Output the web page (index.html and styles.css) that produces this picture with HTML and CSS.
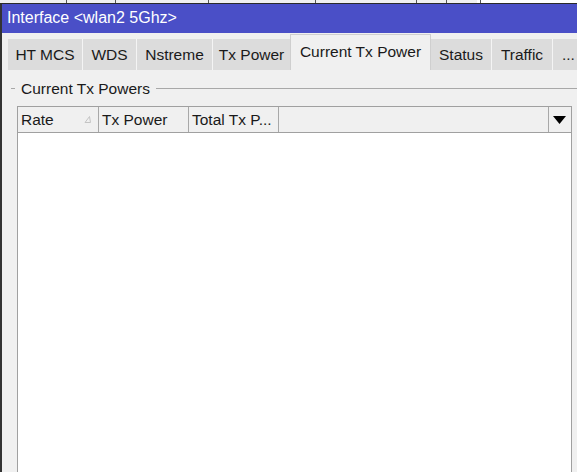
FILE: index.html
```html
<!DOCTYPE html>
<html lang="en">

<head>
    <meta charset="UTF-8">
    <meta name="viewport" content="width=device-width, initial-scale=1.0">
    <title>Interface &lt;wlan2 5Ghz&gt;</title>
    <link rel="stylesheet" href="styles.css">
</head>

<body>
    <!-- bottom edge of the window behind -->
    <div class="back-strip">
        <span class="back-sep"></span>
        <span class="back-sep"></span>
        <span class="back-sep"></span>
        <span class="back-sep"></span>
        <span class="back-sep"></span>
        <span class="back-sep"></span>
        <span class="back-sep"></span>
    </div>

    <div class="window">
        <div class="title-bar">Interface &lt;wlan2 5Ghz&gt;</div>

        <div class="tabs">
            <div class="tab tab-mcs">HT MCS</div>
            <div class="tab tab-wds">WDS</div>
            <div class="tab tab-nstreme">Nstreme</div>
            <div class="tab tab-txpower">Tx Power</div>
            <div class="tab active">Current Tx Power</div>
            <div class="tab tab-status">Status</div>
            <div class="tab tab-traffic">Traffic</div>
            <div class="tab more">...</div>
        </div>

        <div class="content">
            <div class="group-title">Current Tx Powers</div>

            <div class="list">
                <div class="list-header">
                    <div class="col col-rate">
                        Rate
                        <svg class="sort-icon" width="7" height="7" viewBox="0 0 7 7">
                            <path d="M5.5 0.5 L1 6.5 L6.5 6.5 Z" fill="none" stroke="#c4c4c4" stroke-width="1"/>
                        </svg>
                    </div>
                    <div class="col col-power">Tx Power</div>
                    <div class="col col-total">Total Tx P...</div>
                    <div class="col col-fill"></div>
                    <div class="col col-menu">
                        <svg width="13" height="8" viewBox="0 0 13 8">
                            <path d="M0 0 L13 0 L6.5 8 Z" fill="#000"/>
                        </svg>
                    </div>
                </div>
                <div class="list-body"></div>
            </div>
        </div>
    </div>
</body>

</html>
```

FILE: styles.css
```css
body {
    margin: 0;
    background-color: #f0f0f0;
    font-family: "Liberation Sans", Arial, sans-serif;
    color: #1a1a1a;
    overflow: hidden;
}

.back-strip {
    display: flex;
    height: 3px;
    background: linear-gradient(to right, #f0f0f0 477px, #ffffff 477px);
    border-bottom: 1px solid #2a2a2a;
}

.back-sep {
    height: 3px;
    border-right: 1px solid #555;
}

.back-sep:nth-child(1) { width: 66px; }
.back-sep:nth-child(2) { width: 48px; }
.back-sep:nth-child(3) { width: 92px; }
.back-sep:nth-child(4) { width: 106px; }
.back-sep:nth-child(5) { width: 100px; }
.back-sep:nth-child(6) { width: 29px; }
.back-sep:nth-child(7) { width: 33px; }

.window {
    border-left: 2px solid #333;
    height: 468px;
}

.title-bar {
    height: 29px;
    line-height: 28px;
    padding-left: 5px;
    background-color: #4a4fc7;
    color: #ffffff;
    font-size: 16px;
}

.tabs {
    display: flex;
    align-items: flex-end;
    height: 37px;
    padding-left: 6px;
}

.tab {
    height: 31px;
    line-height: 31px;
    background-color: #dcdcdc;
    border-left: 1px solid #f4f4f4;
    font-size: 15.5px;
    text-align: center;
    white-space: nowrap;
    box-sizing: border-box;
}

.tab:first-child {
    border-left: none;
}

.tab-mcs { width: 74px; }
.tab-wds { width: 54px; }
.tab-nstreme { width: 76px; }
.tab-txpower { width: 78px; }
.tab-status { width: 60px; }
.tab-traffic { width: 61px; }

.tab.active {
    width: 141px;
    height: 36px;
    line-height: 34px;
    background-color: #f0f0f0;
    border: 1px solid #cfcfcf;
    border-bottom: none;
}

.tab.active + .tab {
    border-left: none;
}

.tab.more {
    flex: 1;
    text-align: left;
    padding-left: 9px;
}

.content {
    padding-top: 10px;
}

.group-title {
    display: flex;
    align-items: center;
    height: 17px;
    font-size: 15.5px;
    line-height: 17px;
}

.group-title::before {
    content: "";
    width: 4px;
    height: 1px;
    margin-left: 9px;
    margin-right: 6px;
    background-color: #a8a8a8;
}

.group-title::after {
    content: "";
    flex: 1;
    height: 1px;
    margin-left: 6px;
    background-color: #a8a8a8;
}

.list {
    margin: 9px 5px 0 15px;
    border: 1px solid #a0a0a0;
    border-bottom: none;
}

.list-header {
    display: flex;
    height: 25px;
    border-bottom: 1px solid #a0a0a0;
    background-color: #f0f0f0;
}

.col {
    display: flex;
    align-items: center;
    padding-left: 3px;
    border-right: 1px solid #a8a8a8;
    font-size: 15.5px;
    white-space: nowrap;
    box-sizing: border-box;
}

.col-rate {
    width: 81px;
    position: relative;
}

.sort-icon {
    position: absolute;
    left: 66px;
    top: 9px;
}

.col-power {
    width: 90px;
}

.col-total {
    width: 90px;
}

.col-fill {
    flex: 1;
}

.col-menu {
    width: 22px;
    padding-left: 4px;
    border-right: none;
}

.list-body {
    height: 360px;
    background-color: #ffffff;
}
```
